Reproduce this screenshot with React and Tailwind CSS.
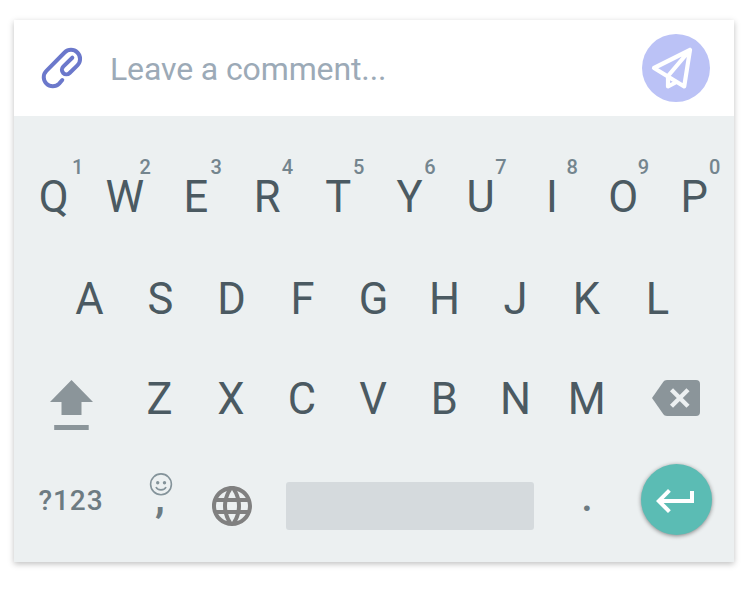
import { MdKeyboardReturn, MdLanguage } from "react-icons/md";

const top = [["Q","1"],["W","2"],["E","3"],["R","4"],["T","5"],["Y","6"],["U","7"],["I","8"],["O","9"],["P","0"]];
const home = ["A","S","D","F","G","H","J","K","L"];
const bottom = ["Z","X","C","V","B","N","M"];

function Key({ label, hint, width = "w-[71.2px]" }) {
  return (
    <button className={`relative flex h-full items-center justify-center pt-[2px] text-[43.5px] leading-none text-[#4b5a62] ${width}`}>
      {label}
      {hint && (
        <span className={`absolute top-[11px] text-[20px] leading-5 font-medium text-[#74858e] ${hint === "1" ? "left-[54px]" : "left-[50.2px]"}`}>{hint}</span>
      )}
    </button>
  );
}

function Paperclip() {
  return (
    <svg className="mt-[2px] h-[50px] w-[50px]" viewBox="0 0 50 50" fill="none" stroke="#6b78cb" strokeWidth="4" strokeLinecap="round">
      <path d="M34.3 13.7L25.2 22.6A4.5 4.5 0 0 0 31.6 29L39.4 21.3A9 9 0 0 0 26.6 8.5L8.4 26.8A9 9 0 0 0 21.2 39.6L24.3 36" />
    </svg>
  );
}

function PaperPlane() {
  return (
    <svg className="h-[68px] w-[68px]" viewBox="0 0 68 68" fill="none" stroke="#fff" strokeWidth="4.2" strokeLinecap="round" strokeLinejoin="round">
      <path d="M12 34L48 16L42.2 52.5ZM48 16L26 42V52.5L34.5 48" />
    </svg>
  );
}

function Shift() {
  return (
    <svg className="h-[50px] w-[43px]" viewBox="0 0 43 50" fill="#8b959a">
      <path d="M21.5 0L43 22H31.5V35H11.5V22H0ZM4.2 45H38.7V50H4.2Z" />
    </svg>
  );
}

function Backspace() {
  return (
    <svg className="h-[36px] w-[48px]" viewBox="0 0 48 36">
      <path fill="#8b959a" d="M44 0H15C13.2 0 12 .8 11 2.2L0 18L11 33.8C12 35.2 13.2 36 15 36H44A4 4 0 0 0 48 32V4A4 4 0 0 0 44 0Z" />
      <path d="M19.5 9.7L36 26.3M36 9.7L19.5 26.3" stroke="#ecf0f1" strokeWidth="4.4" />
    </svg>
  );
}

function Smiley() {
  return (
    <svg className="ml-[1px] h-[24px] w-[24px]" viewBox="0 0 24 24" fill="none" stroke="#84939a" strokeWidth="1.6">
      <circle cx="12" cy="12.3" r="10.4" />
      <path d="M7 15C8.5 18.8 15.5 18.8 17 15" />
      <circle cx="8.7" cy="10.7" r="1.7" fill="#84939a" stroke="none" />
      <circle cx="15.5" cy="10.7" r="1.7" fill="#84939a" stroke="none" />
    </svg>
  );
}

export default function App() {
  return (
    <main className="h-[608px] w-[748px] bg-white pt-5 pl-[14px] font-[Roboto,sans-serif]">
      <section className="h-[542px] w-[720px] bg-[#ecf0f1] shadow-[0_2px_6px_rgba(0,0,0,0.25)]">
        <header className="flex h-24 items-center bg-white pr-6 pl-6">
          <Paperclip />
          <span className="mt-[2px] ml-[22px] flex-1 text-[32px] tracking-[-0.12px] text-[#9caab7]">Leave a comment...</span>
          <button className="h-[68px] w-[68px] rounded-full bg-[#bbc2f6]"><PaperPlane /></button>
        </header>
        <div className="flex h-[446px] flex-col pt-[30px]">
          <div className="flex h-[102px] pl-1">{top.map(([l, h]) => <Key key={l} label={l} hint={h} />)}</div>
          <div className="flex h-[102px] pl-[40px]">{home.map((l) => <Key key={l} label={l} width="w-[71px]" />)}</div>
          <div className="flex h-[98px]">
            <button className="flex w-[110px] items-start pt-[30px] pl-[36px]"><Shift /></button>
            {bottom.map((l) => <Key key={l} label={l} />)}
            <button className="flex flex-1 items-start justify-end pt-[30px] pr-[34px]"><Backspace /></button>
          </div>
          <div className="flex h-[114px] items-start">
            <button className="mt-[37px] w-[110px] pl-[24.5px] text-left text-[28px] leading-[32px] font-medium tracking-[0.9px] text-[#6d7b82]">?123</button>
            <button className="mt-[24px] flex w-[72px] flex-col items-center">
              <Smiley />
              <span className="-mt-[13px] text-[40px] leading-[32px] font-bold text-[#6d7b82]">,</span>
            </button>
            <button className="ml-[12px] mt-[34px] text-[48px] text-[#808080]"><MdLanguage /></button>
            <button className="ml-[30px] mt-[34px] h-[48px] w-[248px] rounded-[3px] bg-[#d5dadd]" aria-label="space" />
            <button className="mt-[35px] w-[106px] text-center text-[36px] leading-[32px] font-bold text-[#6d7b82]">.</button>
            <button className="mt-[16px] ml-[0.5px] flex h-[71px] w-[71px] items-center justify-center rounded-full bg-[#5bbcb4] pt-[3px] text-[48px] text-white shadow-[0_1px_4px_rgba(0,0,0,0.45)]"><MdKeyboardReturn /></button>
          </div>
        </div>
      </section>
    </main>
  );
}
